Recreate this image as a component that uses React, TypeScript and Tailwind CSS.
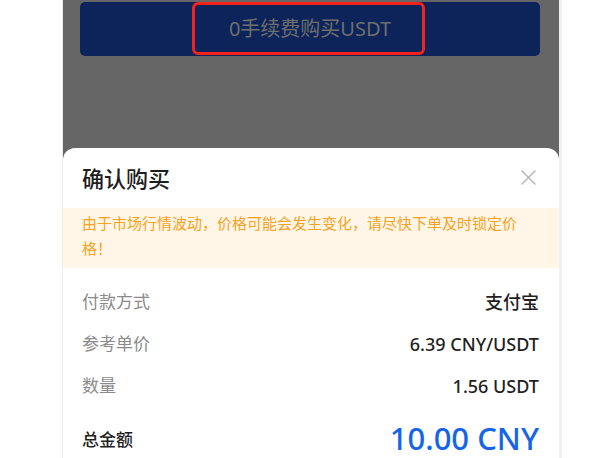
import React from "react";

const font = { fontFamily: '"Noto Sans", "Noto Sans CJK SC", sans-serif' };

function Row({ label, value }: { label: string; value: string }) {
  return (
    <div className="flex h-[42px] items-center justify-between">
      <span className="text-[17px] text-[#8a8a8a]">{label}</span>
      <span className="text-[18px] font-medium text-[#1f1f1f]">{value}</span>
    </div>
  );
}

export default function App() {
  return (
    <div className="h-[458px] w-[605px] overflow-hidden bg-white" style={font}>
      <div className="ml-[62px] h-full w-[500px] border-l border-r-[3px] border-l-[#ececf0] border-r-[#f1f1f5] bg-[#666666]">
        <div className="h-[148px] pl-[17px] pr-[19px] pt-[2px]">
          <div className="relative flex h-[54px] items-center justify-center rounded-[5px] bg-[#0c2459]">
            <span className="text-[20px] text-[#6e6e6e]">0手续费购买USDT</span>
            <div className="absolute left-[112px] top-0 h-[53px] w-[233px] rounded-[6px] border-[3px] border-[#f3221a]" />
          </div>
        </div>
        <div className="h-[310px] rounded-t-[12px] bg-white">
          <div className="flex h-[60px] items-center justify-between pl-[19px] pr-[23px]">
            <span className="text-[22px] font-medium text-[#1e1e1e]">确认购买</span>
            <svg width="15" height="15" viewBox="0 0 15 15" className="mb-[2px]">
              <path d="M1 1L14 14M14 1L1 14" stroke="#b3b3b3" strokeWidth="1.4" strokeLinecap="round" />
            </svg>
          </div>
          <div className="bg-[#fff6e7] pl-[19px] pb-[7px] pt-[3px]">
            <p className="w-[440px] text-[15px] leading-[25px] text-[#f5a21e]">
              由于市场行情波动，价格可能会发生变化，请尽快下单及时锁定价格！
            </p>
          </div>
          <div className="pl-[19px] pr-[20px] pt-[13px]">
            <Row label="付款方式" value="支付宝" />
            <Row label="参考单价" value="6.39 CNY/USDT" />
            <Row label="数量" value="1.56 USDT" />
            <div className="flex h-[62px] items-center justify-between">
              <span className="mt-[4px] text-[17px] font-medium text-[#1e1e1e]">总金额</span>
              <span className="text-[31px] font-medium text-[#1565e8]">10.00 CNY</span>
            </div>
          </div>
        </div>
      </div>
    </div>
  );
}
